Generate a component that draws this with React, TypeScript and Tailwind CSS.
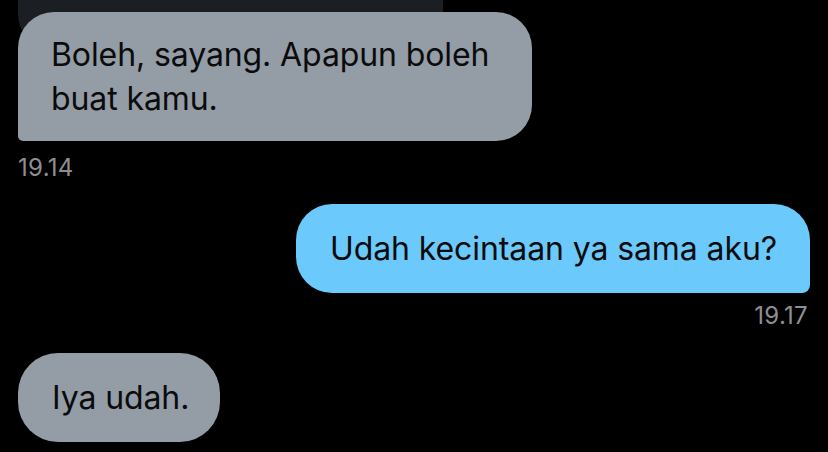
import React from "react";

export default function App() {
  const font = { fontFamily: "Inter, 'Noto Sans', sans-serif" };
  return (
    <div
      className="w-[828px] h-[452px] bg-black overflow-hidden flex flex-col px-[18px]"
      style={font}
    >
      <div className="w-[425px] h-[90px] -mt-[40px] shrink-0 rounded-[36px] bg-[#1b1e22]" />
      <div className="w-[514px] h-[129px] -mt-[38px] shrink-0 rounded-[36px] rounded-bl-[5px] bg-[#949ca6] flex items-center pl-[33px] text-[32px] leading-[44px] text-[#0b0b0c] tracking-[-0.1px]">
        <p>
          Boleh, sayang. Apapun boleh
          <br />
          buat kamu.
        </p>
      </div>
      <div className="mt-[14px] text-[24px] leading-[26px] text-[#8e8f94] tracking-[0.3px]">19.14</div>
      <div className="self-end mt-[23px] w-[514px] h-[89px] shrink-0 rounded-[36px] rounded-br-[8px] bg-[#6cc9fc] flex items-center pl-[34px] text-[32px] leading-[44px] text-[#0b0b0c] tracking-[-0.1px]">
        Udah kecintaan ya sama aku?
      </div>
      <div className="self-end mt-[10px] mr-[2px] text-[24px] leading-[26px] text-[#8e8f94] tracking-[0.3px]">19.17</div>
      <div className="mt-[24px] w-[202px] h-[89px] shrink-0 rounded-[40px] bg-[#949ca6] flex items-center pl-[34px] text-[32px] leading-[44px] text-[#0b0b0c] tracking-[-0.1px]">
        Iya udah.
      </div>
    </div>
  );
}
